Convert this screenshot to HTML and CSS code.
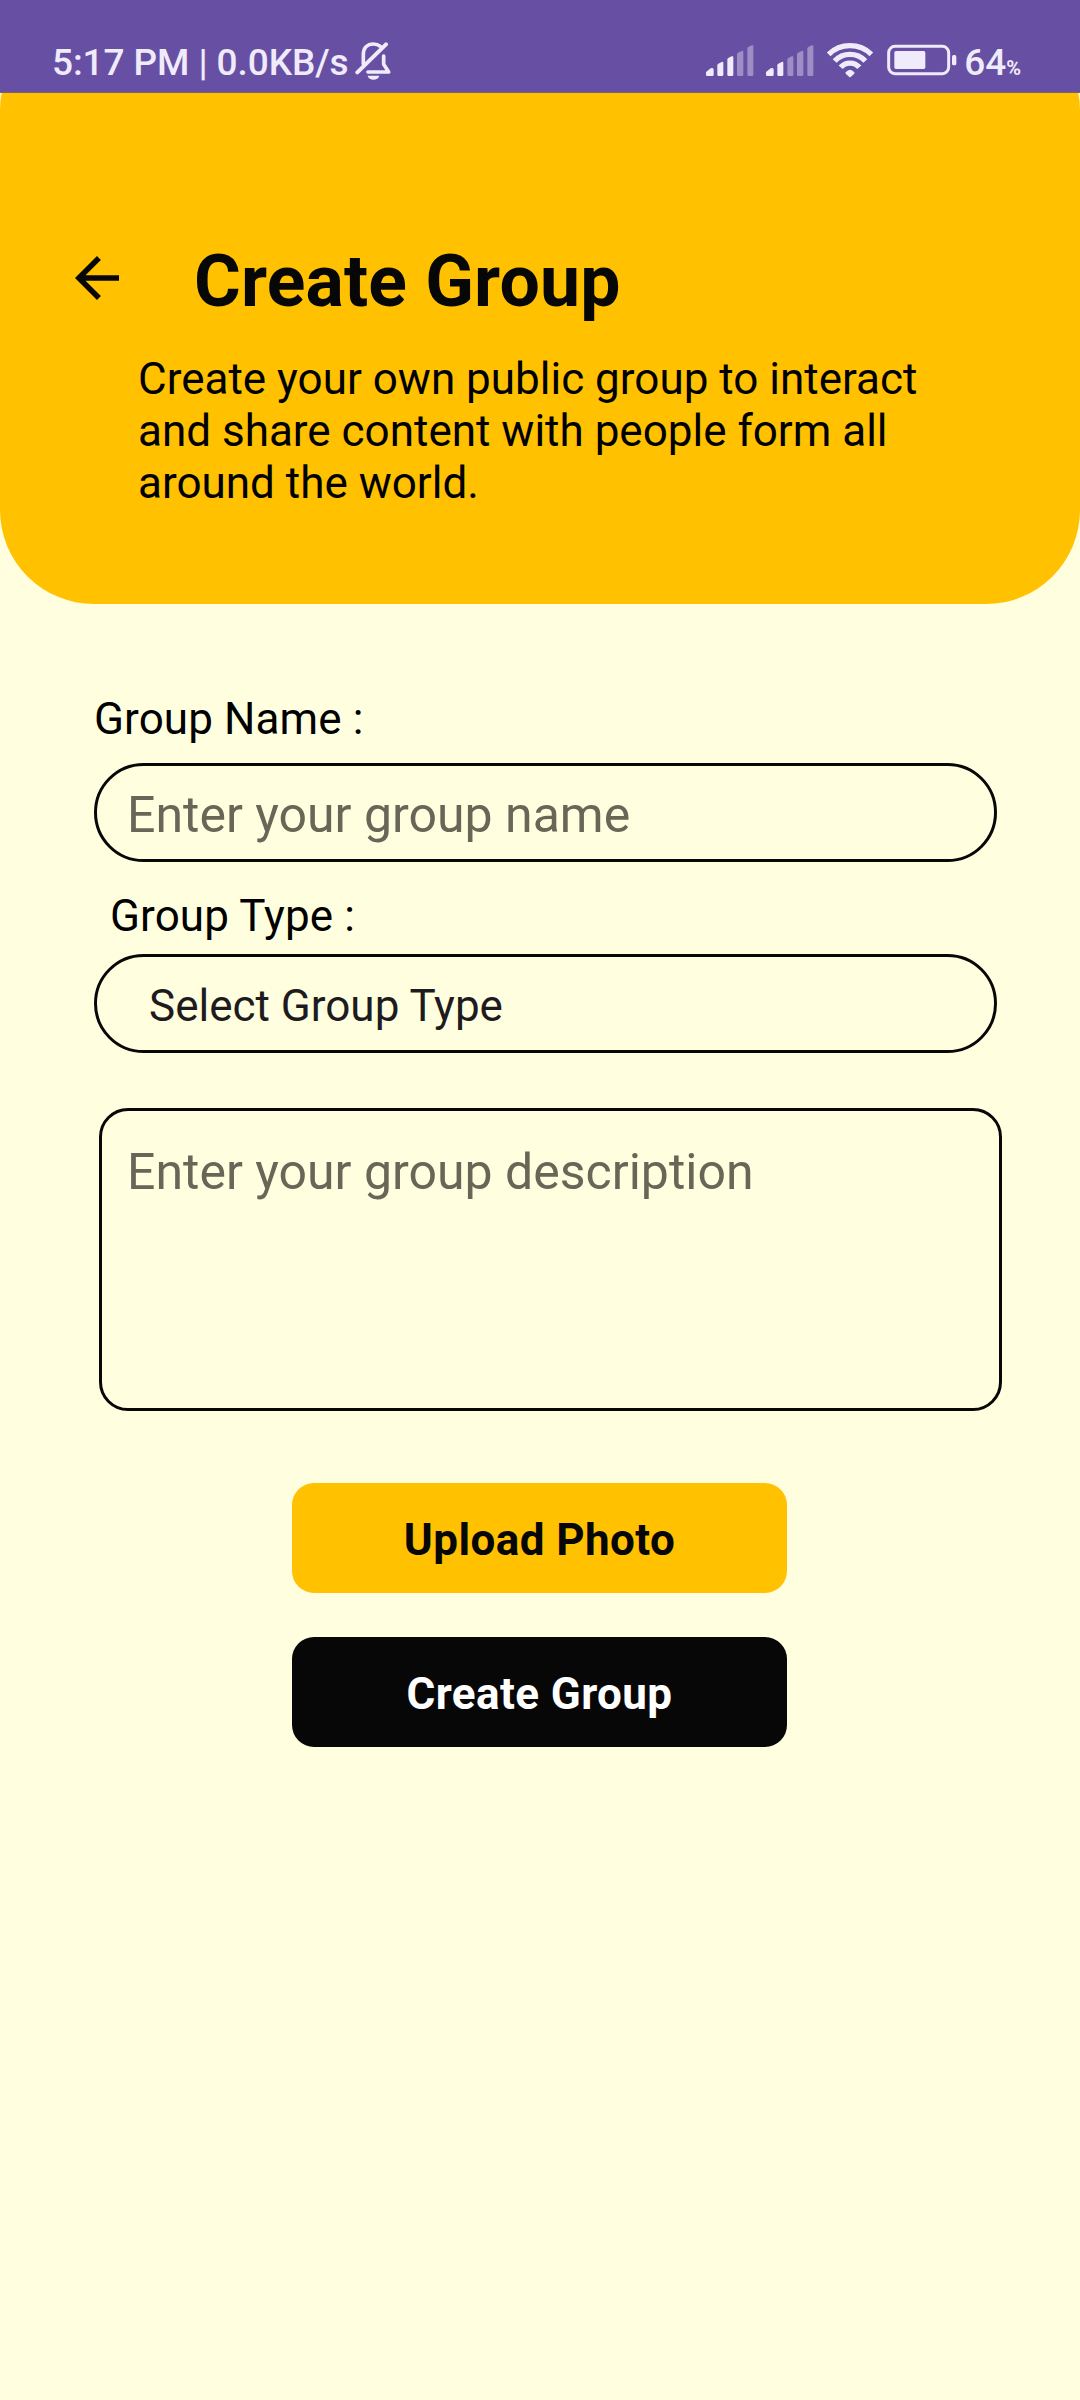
FILE: index.html
```html
<!DOCTYPE html>
<html lang="en">
<head>
<meta charset="utf-8">
<title>Create Group</title>
<link rel="stylesheet" href="styles.css">
</head>
<body>
<div class="status">
  <span class="clock">5:17 PM | 0.0KB/s</span>
  <svg class="bell" viewBox="45 33 111 120" fill="none" stroke="currentColor" stroke-width="11" stroke-linecap="round" stroke-linejoin="round">
    <path d="M70 102V74C70 54 82 42 100 42C108 42 115 44 121 49"/>
    <path d="M131 78V103L146 126H84"/>
    <path d="M52 127L138 43" stroke-width="12"/>
    <path d="M83 137H118C115 153 86 153 83 137Z" fill="currentColor" stroke="none"/>
  </svg>
  <div class="indicators">
    <svg class="signal" viewBox="0 0 144 108" fill="currentColor">
      <path d="M0 98V90L14 79Q23 75 23 83V98Q23 102 19 102H4Q0 102 0 98Z"/>
      <path d="M34 70Q34 67 37 65L47 60Q52 58 52 63V98Q52 102 48 102H38Q34 102 34 98Z"/>
      <path d="M64 53Q64 50 67 48L77 43Q82 41 82 46V98Q82 102 78 102H68Q64 102 64 98Z"/>
      <path class="dim" d="M93 37Q93 34 96 32L107 27Q112 25 112 30V98Q112 102 108 102H97Q93 102 93 98Z"/>
      <path class="dim" d="M124 20Q124 17 127 15L137 10Q142 8 142 13V98Q142 102 138 102H128Q124 102 124 98Z"/>
    </svg>
    <svg class="signal" viewBox="0 0 144 108" fill="currentColor">
      <path d="M0 98V90L14 79Q23 75 23 83V98Q23 102 19 102H4Q0 102 0 98Z"/>
      <path d="M34 70Q34 67 37 65L47 60Q52 58 52 63V98Q52 102 48 102H38Q34 102 34 98Z"/>
      <path class="dim" d="M64 53Q64 50 67 48L77 43Q82 41 82 46V98Q82 102 78 102H68Q64 102 64 98Z"/>
      <path class="dim" d="M93 37Q93 34 96 32L107 27Q112 25 112 30V98Q112 102 108 102H97Q93 102 93 98Z"/>
      <path class="dim" d="M124 20Q124 17 127 15L137 10Q142 8 142 13V98Q142 102 138 102H128Q124 102 124 98Z"/>
    </svg>
    <svg class="wifi" viewBox="0 0 144 108" fill="none" stroke="currentColor" stroke-width="16">
      <path d="M8 37A92 92 0 0 1 136 37"/>
      <path d="M26 57A63 63 0 0 1 118 57"/>
      <path d="M44 76A37 37 0 0 1 100 76"/>
      <path d="M59 91Q72 76 85 91Q87 93 84 96L74 105Q72 107 70 105L60 96Q57 93 59 91Z" fill="currentColor" stroke="none"/>
    </svg>
    <svg class="battery" viewBox="0 0 216 108" fill="currentColor">
      <rect x="8" y="13" width="180" height="82" rx="19" fill="none" stroke="currentColor" stroke-width="9"/>
      <rect x="25" y="27" width="93" height="54" rx="5"/>
      <rect x="198" y="39" width="13" height="31" rx="5"/>
    </svg>
    <span class="level">64<span class="percent">%</span></span>
  </div>
</div>

<header class="hero">
  <div class="hero-row">
    <svg class="back" viewBox="0 0 24 24" fill="#070707"><path d="M20 11H7.83l5.59-5.59L12 4l-8 8 8 8 1.41-1.41L7.83 13H20v-2z"/></svg>
    <h1 class="title">Create Group</h1>
  </div>
  <p class="intro">Create your own public group to interact<br>and share content with people form all<br>around the world.</p>
</header>

<main class="form">
  <div class="label">Group Name :</div>
  <div class="field name"><span class="hint">Enter your group name</span></div>
  <div class="label type-label">Group Type :</div>
  <div class="field select">Select Group Type</div>
  <div class="field description"><span class="hint">Enter your group description</span></div>
  <div class="actions">
    <button class="button upload">Upload Photo</button>
    <button class="button create">Create Group</button>
  </div>
</main>
</body>
</html>
```
FILE: styles.css
```css
* {
  box-sizing: border-box;
}

body {
  margin: 0;
  min-height: 2400px;
  background: #ffffdf;
  color: #070707;
  font-family: Roboto, sans-serif;
  font-size: 44px;
  line-height: 52px;
}

svg {
  display: block;
  flex: none;
}

.status {
  position: relative;
  z-index: 1;
  display: flex;
  align-items: flex-start;
  height: 93px;
  padding: 0 59px 0 52px;
  border-bottom: 1px solid #80606c;
  background: #6750a3;
  color: #f0ebfa;
  font-size: 37px;
  font-weight: 500;
  line-height: 44px;
  white-space: nowrap;
}

.clock {
  margin-top: 41px;
  letter-spacing: -0.1px;
}

.bell {
  width: 37px;
  height: 40px;
  margin: 41px 0 0 7px;
}

.indicators {
  display: flex;
  gap: 12px;
  margin: 42px 0 0 auto;
}

.signal,
.wifi {
  width: 48px;
  height: 36px;
}

.dim {
  opacity: 0.4;
}

.battery {
  width: 72px;
  height: 36px;
}

.level {
  margin: -1px 0 0 -6px;
}

.percent {
  font-size: 20px;
  font-weight: 700;
}

.hero {
  height: 588px;
  margin-top: -77px;
  padding-top: 224px;
  border-radius: 94px;
  background: #ffc100;
}

.hero-row {
  display: flex;
  align-items: flex-start;
  gap: 64px;
  padding-left: 64px;
}

.back {
  width: 66px;
  height: 66px;
  margin-top: 5px;
}

.title {
  margin: 0;
  font-size: 71.5px;
  font-weight: 700;
  line-height: 84px;
  letter-spacing: 0.2px;
}

.intro {
  margin: 29px 0 0 138px;
  color: #000;
}

.form {
  padding: 89px 78px 0 94px;
}

.label {
  color: #000;
  letter-spacing: 0.1px;
}

.field {
  width: 903px;
  border: 3px solid #070707;
}

.name,
.select {
  height: 99px;
  border-radius: 50px;
}

.name {
  margin-top: 18px;
  padding: 20px 30px 0;
}

.hint {
  display: block;
  color: #686757;
  font-size: 50px;
  line-height: 58px;
}

.type-label {
  margin: 28px 0 0 16px;
}

.select {
  margin-top: 12px;
  padding: 23px 52px 0;
  color: #1d1b20;
}

.description {
  height: 303px;
  margin: 55px 0 0 5px;
  padding: 32px 25px 0;
  border-radius: 29px;
}

.actions {
  display: flex;
  flex-direction: column;
  gap: 44px;
  width: 495px;
  margin: 72px 0 0 198px;
}

.button {
  height: 110px;
  padding: 4px 0 0;
  border: 0;
  border-radius: 22px;
  font: 700 44px/52px Roboto, sans-serif;
  letter-spacing: 0.4px;
}

.upload {
  background: #ffc100;
  color: #070707;
}

.create {
  background: #070707;
  color: #fff;
}
```
